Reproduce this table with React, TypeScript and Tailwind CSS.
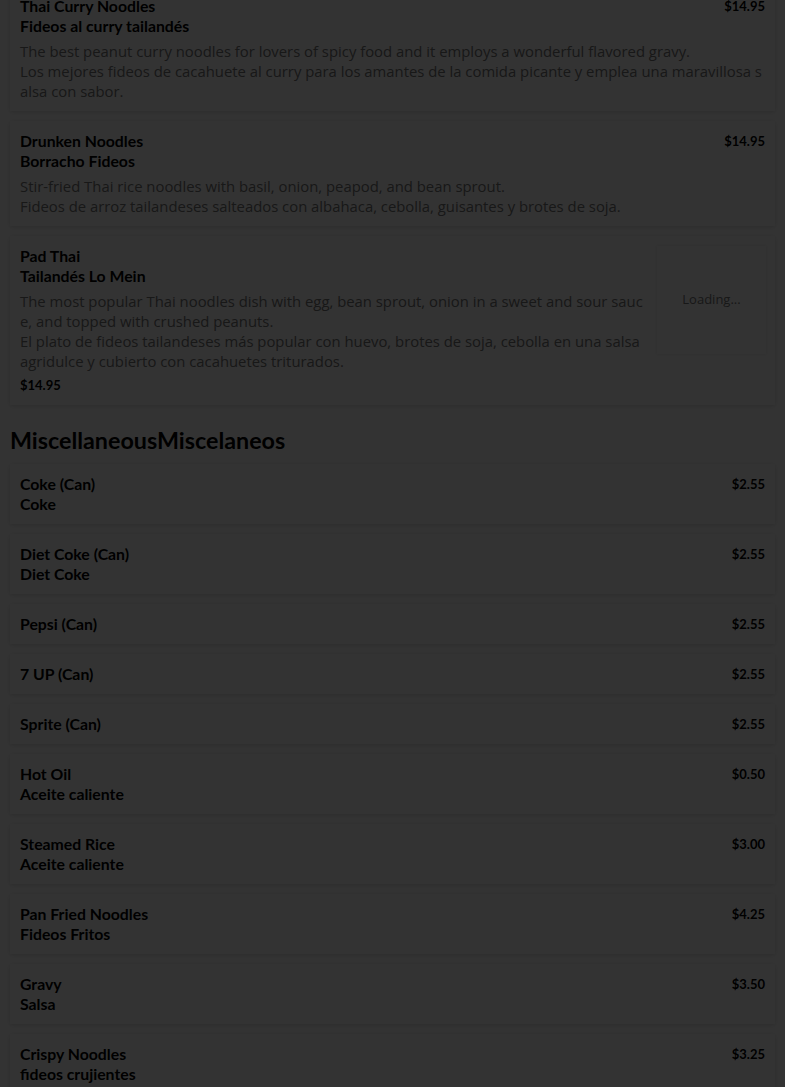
import React from 'react';

interface Item {
    name: string;
    nameEs?: string;
    desc?: string;
    descEs?: string;
    price: string;
    image?: boolean;
}

const noodles: Item[] = [
    {
        name: 'Thai Curry Noodles',
        nameEs: 'Fideos al curry tailandés',
        desc: 'The best peanut curry noodles for lovers of spicy food and it employs a wonderful flavored gravy.',
        descEs: 'Los mejores fideos de cacahuete al curry para los amantes de la comida picante y emplea una maravillosa salsa con sabor.',
        price: '$14.95',
    },
    {
        name: 'Drunken Noodles',
        nameEs: 'Borracho Fideos',
        desc: 'Stir-fried Thai rice noodles with basil, onion, peapod, and bean sprout.',
        descEs: 'Fideos de arroz tailandeses salteados con albahaca, cebolla, guisantes y brotes de soja.',
        price: '$14.95',
    },
    {
        name: 'Pad Thai',
        nameEs: 'Tailandés Lo Mein',
        desc: 'The most popular Thai noodles dish with egg, bean sprout, onion in a sweet and sour sauce, and topped with crushed peanuts.',
        descEs: 'El plato de fideos tailandeses más popular con huevo, brotes de soja, cebolla en una salsa agridulce y cubierto con cacahuetes triturados.',
        price: '$14.95',
        image: true,
    },
];

const misc: Item[] = [
    { name: 'Coke (Can)', nameEs: 'Coke', price: '$2.55' },
    { name: 'Diet Coke (Can)', nameEs: 'Diet Coke', price: '$2.55' },
    { name: 'Pepsi (Can)', price: '$2.55' },
    { name: '7 UP (Can)', price: '$2.55' },
    { name: 'Sprite (Can)', price: '$2.55' },
    { name: 'Hot Oil', nameEs: 'Aceite caliente', price: '$0.50' },
    { name: 'Steamed Rice', nameEs: 'Aceite caliente', price: '$3.00' },
    { name: 'Pan Fried Noodles', nameEs: 'Fideos Fritos', price: '$4.25' },
    { name: 'Gravy', nameEs: 'Salsa', price: '$3.50' },
    { name: 'Crispy Noodles', nameEs: 'fideos crujientes', price: '$3.25' },
];

const title = "font-['Lato',sans-serif] font-bold text-[15.8px] leading-5 text-black";
const price = "font-['Lato',sans-serif] font-bold text-[13px] leading-5 text-black";
const body = "font-['Open_Sans',sans-serif] text-[14.85px] leading-5 text-[#777] break-all";

const MenuCard: React.FC<{ item: Item }> = ({ item }) => {
    return (
        <div className="mb-[10px] bg-white p-[10px] shadow-[0_1px_4px_rgba(0,0,0,0.15)] flex">
            <div className="flex-1 min-w-0">
                <div className="flex justify-between">
                    <div className={title}>
                        <div>{item.name}</div>
                        {item.nameEs && <div>{item.nameEs}</div>}
                    </div>
                    {!item.image && <div className={price}>{item.price}</div>}
                </div>
                {item.desc && (
                    <div className={body + ' mt-[5px]'}>
                        <div>{item.desc}</div>
                        <div>{item.descEs}</div>
                    </div>
                )}
                {item.image && <div className={price + ' mt-[4px]'}>{item.price}</div>}
            </div>
            {item.image && (
                <div className="ml-[11px] w-[109px] h-[108px] shrink-0 bg-white shadow-[0_0_4px_rgba(0,0,0,0.12)] flex items-center justify-center font-['Open_Sans',sans-serif] text-[13px] text-[#777] mr-[-1px]">
                    Loading...
                </div>
            )}
        </div>
    );
};

export default function App() {
    return (
        <div className="relative min-h-screen bg-white overflow-hidden">
            <div className="px-[10px] -mt-[14px]">
                {noodles.map((it) => (
                    <MenuCard key={it.name} item={it} />
                ))}
                <h2 className="font-['Lato',sans-serif] font-bold text-[23.3px] leading-8 text-black mt-[19px] mb-[8px]">
                    MiscellaneousMiscelaneos
                </h2>
                {misc.map((it) => (
                    <MenuCard key={it.name} item={it} />
                ))}
            </div>
            <div className="fixed inset-0 bg-black/80"></div>
        </div>
    );
}
